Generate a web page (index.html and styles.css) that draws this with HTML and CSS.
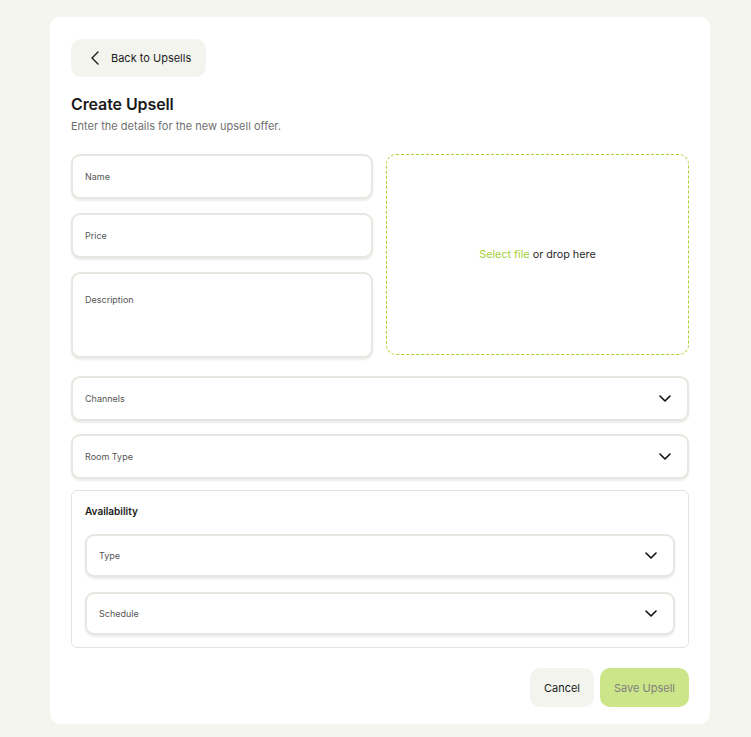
FILE: index.html
```html
<!DOCTYPE html>
<html lang="en">
<head>
<meta charset="utf-8">
<title>Create Upsell</title>
<link rel="stylesheet" href="styles.css">
</head>
<body>
<main class="card">
  <button class="back-btn" type="button">
    <svg class="back-icon" width="8" height="14" viewBox="0 0 8 14" fill="none"><path d="M7 1L1 7L7 13" stroke="#1a1a1a" stroke-width="1.4" stroke-linecap="round" stroke-linejoin="round"/></svg>
    <span>Back to Upsells</span>
  </button>

  <h1 class="title">Create Upsell</h1>
  <p class="subtitle">Enter the details for the new upsell offer.</p>

  <div class="top-grid">
    <div class="left-col">
      <div class="field"><span class="placeholder">Name</span></div>
      <div class="field"><span class="placeholder">Price</span></div>
      <div class="field field-area"><span class="placeholder">Description</span></div>
    </div>
    <div class="dropzone">
      <span><span class="accent">Select file</span> or drop here</span>
    </div>
  </div>

  <div class="field select select-first"><span class="placeholder">Channels</span><svg class="chev" width="12" height="7" viewBox="0 0 12 7" fill="none"><path d="M1 1L6 6L11 1" stroke="#111" stroke-width="1.6" stroke-linecap="round" stroke-linejoin="round"/></svg></div>
  <div class="field select select-next"><span class="placeholder">Room Type</span><svg class="chev" width="12" height="7" viewBox="0 0 12 7" fill="none"><path d="M1 1L6 6L11 1" stroke="#111" stroke-width="1.6" stroke-linecap="round" stroke-linejoin="round"/></svg></div>

  <section class="availability">
    <h2 class="section-title">Availability</h2>
    <div class="field select"><span class="placeholder">Type</span><svg class="chev" width="12" height="7" viewBox="0 0 12 7" fill="none"><path d="M1 1L6 6L11 1" stroke="#111" stroke-width="1.6" stroke-linecap="round" stroke-linejoin="round"/></svg></div>
    <div class="field select"><span class="placeholder">Schedule</span><svg class="chev" width="12" height="7" viewBox="0 0 12 7" fill="none"><path d="M1 1L6 6L11 1" stroke="#111" stroke-width="1.6" stroke-linecap="round" stroke-linejoin="round"/></svg></div>
  </section>

  <div class="actions">
    <button class="btn btn-cancel" type="button">Cancel</button>
    <button class="btn btn-save" type="button">Save Upsell</button>
  </div>
</main>
</body>
</html>
```

FILE: styles.css
```css
* { box-sizing: border-box; }
html, body { margin: 0; padding: 0; }
body {
  background: #f5f5f0;
  font-family: Inter, "Liberation Sans", Arial, sans-serif;
  color: #1a1a1a;
  padding: 17px 41px 13px 50px;
}
.card {
  width: 660px;
  background: #ffffff;
  border-radius: 10px;
  padding: 22px 21px 17px 21px;
  display: flex;
  flex-direction: column;
}
.back-btn {
  align-self: flex-start;
  display: flex;
  align-items: center;
  gap: 12px;
  height: 38px;
  width: 135px;
  padding: 0 0 0 20px;
  border: none;
  border-radius: 10px;
  background: #f4f4ef;
  font-family: inherit;
  font-size: 11px;
  color: #1a1a1a;
}
.back-icon { display: block; }
.title {
  margin: 17px 0 0 0;
  font-size: 16px;
  font-weight: 600;
  line-height: 20px;
  letter-spacing: -0.1px;
}
.subtitle {
  margin: 5px 0 0 0;
  font-size: 11px;
  line-height: 15px;
  color: #707070;
}
.top-grid {
  margin-top: 20px;
  display: grid;
  grid-template-columns: 302px 303px;
  column-gap: 13px;
  align-items: start;
}
.left-col {
  display: flex;
  flex-direction: column;
  gap: 14px;
}
.field {
  flex: none;
  height: 45px;
  border: 2px solid #e7e7e1;
  border-radius: 9px;
  box-shadow: 0 2px 2px rgba(0, 0, 0, 0.08);
  background: #fff;
  display: flex;
  align-items: center;
  padding: 0 12px;
}
.field-area {
  height: 86px;
  align-items: flex-start;
  padding-top: 20px;
}
.placeholder {
  font-size: 9px;
  color: #555;
  line-height: 12px;
}
.dropzone {
  height: 201px;
  border: 1px dashed #a6d22e;
  border-radius: 10px;
  display: flex;
  align-items: center;
  justify-content: center;
  font-size: 10.8px;
  color: #2a2a2a;
}
.accent { color: #a3cf3a; }
.select {
  justify-content: space-between;
  padding-right: 16px;
}
.select-first { margin-top: 18px; }
.select-next { margin-top: 13px; }
.chev { display: block; }
.availability {
  margin-top: 11px;
  border: 1px solid #e4e4de;
  border-radius: 6px;
  padding: 14px 13px 12px 13px;
  display: flex;
  flex-direction: column;
  gap: 15px;
}
.section-title {
  margin: 0 0 2px 0;
  font-size: 10px;
  font-weight: 600;
  line-height: 12px;
}
.availability .field { height: 43px; }
.actions {
  margin-top: 20px;
  display: flex;
  justify-content: flex-end;
  gap: 6px;
}
.btn {
  height: 39px;
  border: none;
  border-radius: 10px;
  font-family: inherit;
  font-size: 11px;
  padding: 0;
}
.btn-cancel {
  width: 64px;
  background: #f4f4ef;
  color: #1a1a1a;
}
.btn-save {
  width: 89px;
  background: #cde589;
  color: #7e7e7e;
}
```
